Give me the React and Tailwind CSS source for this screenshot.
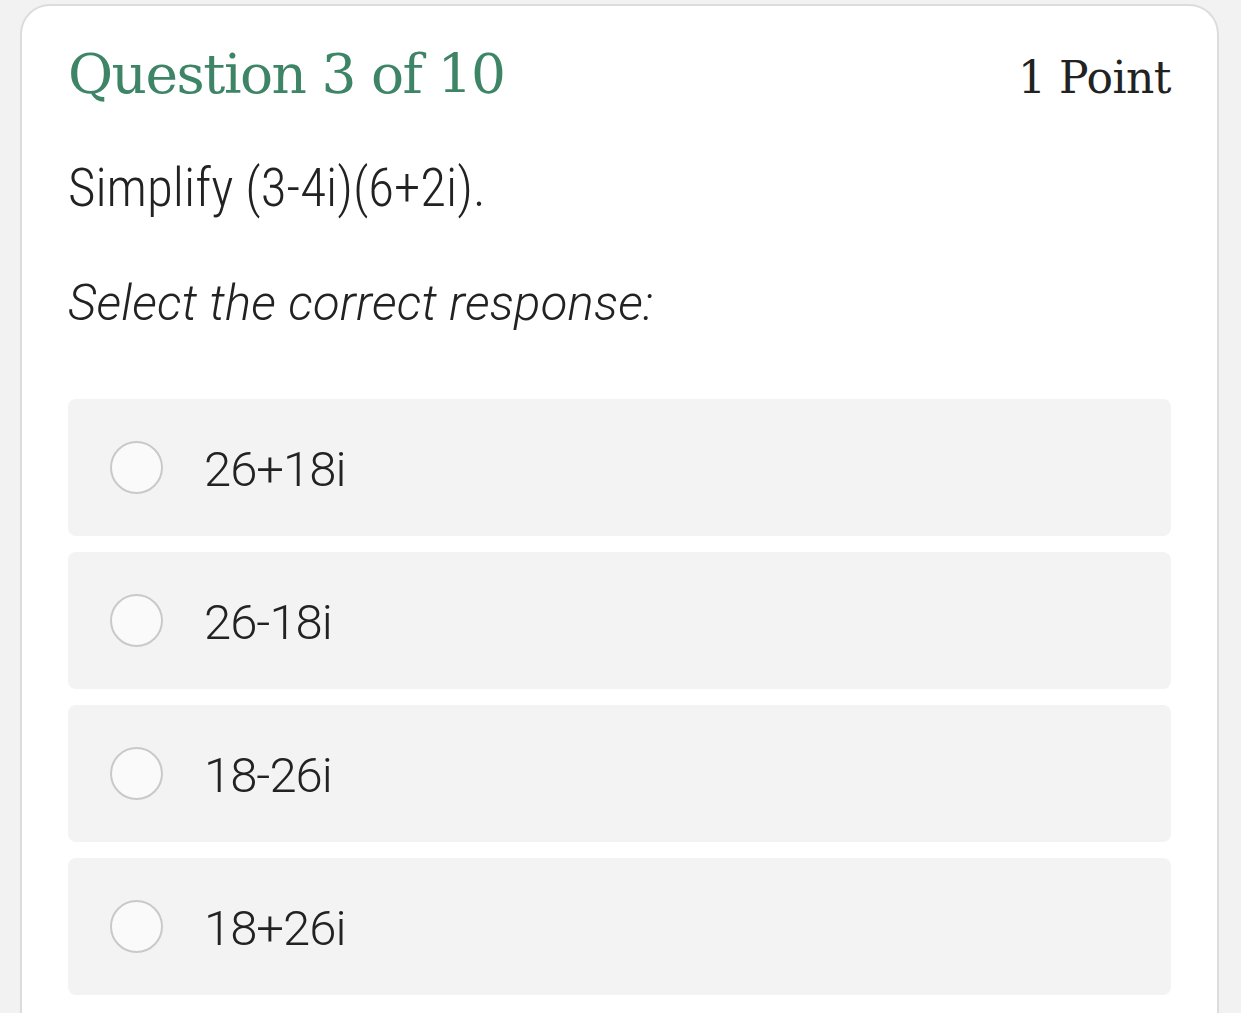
import React from 'react';

const options = ['26+18i', '26-18i', '18-26i', '18+26i'];

function Option({ label }) {
  return (
    <div className="flex h-[137px] items-center rounded-lg bg-[#f3f3f3] pl-[42px]">
      <span className="h-[53px] w-[53px] shrink-0 rounded-full border-2 border-[#c9c9c9] bg-[#fafafa]" />
      <span className="ml-[41px] pt-1 text-[49px] font-light leading-none tracking-[-1px] text-[#222]">{label}</span>
    </div>
  );
}

export default function App() {
  return (
    <div className="h-[1013px] overflow-hidden bg-[#f2f2f2] pt-1 pl-5 pr-[22px] font-['Roboto',sans-serif]">
      <div className="h-[1100px] rounded-t-[30px] border-2 border-[#dcdcdc] bg-white pl-[46px] pr-[46px] pt-[41px]">
        <div className="flex items-baseline justify-between font-['DejaVu_Serif',serif] leading-none">
          <h1 className="text-[55px] tracking-[-1.5px] text-[#3e8467]">Question 3 of 10</h1>
          <span className="text-[44px] tracking-[-0.5px] text-[#222]">1 Point</span>
        </div>
        <p className="mt-[60px] text-[53px] font-light leading-none text-[#222] [font-stretch:80%]">Simplify (3-4i)(6+2i).</p>
        <p className="mt-[64px] text-[49px] font-light italic leading-none tracking-[0.25px] text-[#222]">Select the correct response:</p>
        <div className="mt-[71px] flex flex-col gap-4">
          {options.map((o) => (
            <Option key={o} label={o} />
          ))}
        </div>
      </div>
    </div>
  );
}
